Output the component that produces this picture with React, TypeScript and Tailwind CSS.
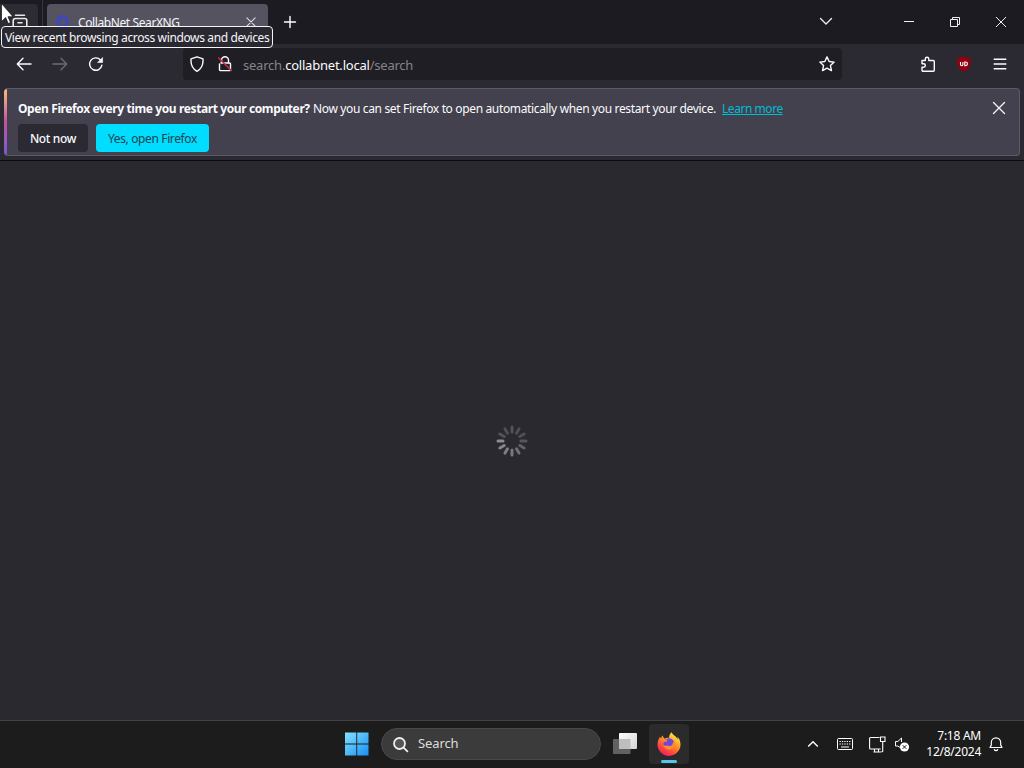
import React from 'react';

type IconProps = { className?: string; children: React.ReactNode; size?: number };

function Icon({ className = '', children, size = 16 }: IconProps) {
  return (
    <svg
      width={size}
      height={size}
      viewBox="0 0 16 16"
      fill="none"
      stroke="currentColor"
      strokeWidth="1.4"
      strokeLinecap="round"
      strokeLinejoin="round"
      className={`shrink-0 ${className}`}
    >
      {children}
    </svg>
  );
}

function TabStrip() {
  return (
    <div className="flex h-[44px] shrink-0 bg-[#1c1b22]">
      <div className="mt-1 flex h-9 w-[38px] justify-center rounded-r bg-[#2d2c34] pl-[2px] pt-[10px] text-[#e8e8ec]">
        <Icon>
          <path d="M3.5 1.2h9M1.2 15V6.500a2 2 0 0 1 2-2h9.600a2 2 0 0 1 2 2V15M6 8.700h4" strokeWidth="1.600" />
        </Icon>
      </div>
      <div className="ml-[4px] h-full w-px bg-[#36353e]" />
      <div className="ml-[4px] mt-1 flex h-9 w-[221px] items-center rounded bg-[#55535f] pl-2 pr-[11px]">
        <svg width="16" height="16" viewBox="0 0 16 16" className="shrink-0" fill="none" stroke="#3c46c8">
          <circle cx="7.500" cy="7" r="5" strokeWidth="2.400" />
          <path d="M5.300 6.800a2.200 2.200 0 0 1 2.200-2.200M11.500 11l4 4" strokeWidth="2" />
        </svg>
        <span className="ml-[7px] flex-1 whitespace-nowrap pt-[2px] text-[12px] tracking-[-0.400px] text-[#f4f4f7]">CollabNet SearXNG</span>
        <Icon size={12} className="text-[#e4e4e8]">
          <path d="M2.500 2.500l11 11M13.500 2.500l-11 11" />
        </Icon>
      </div>
      <Icon className="ml-[14px] mt-[14px] text-white">
        <path d="M8 2.500v11M2.500 8h11" />
      </Icon>
      <div className="flex-1" />
      <Icon className="mr-[69px] mt-[13px] text-[#ececf0]">
        <path d="M2.500 5.500L8 11l5.500-5.500" />
      </Icon>
      <svg width="12" height="12" viewBox="0 0 12 12" className="mr-[34px] mt-4" stroke="#f0f0f3">
        <path d="M1 5.500h10" />
      </svg>
      <svg width="12" height="12" viewBox="0 0 12 12" className="mr-[34px] mt-4" stroke="#f0f0f3" fill="none">
        <path d="M1.500 3.500h7v7h-7zM3.500 3.500v-2h7v7h-2" />
      </svg>
      <svg width="12" height="12" viewBox="0 0 12 12" className="mr-[17px] mt-4" stroke="#f0f0f3" fill="none">
        <path d="M1 1l10 10M11 1L1 11" />
      </svg>
    </div>
  );
}

function NavBar() {
  return (
    <div className="flex h-[43px] shrink-0 items-center bg-[#2b2a33] pb-[3px] pl-4 pr-4 text-[#fbfbfe]">
      <Icon>
        <path d="M15 8H1.500M7 2.200L1.300 8 7 13.800" />
      </Icon>
      <Icon className="ml-5 text-[#6d6c74]">
        <path d="M1 8h13.500M9 2.200L14.700 8 9 13.800" />
      </Icon>
      <Icon className="ml-5">
        <path d="M13.900 9.200A6.200 6.200 0 1 1 12.500 4" />
        <path d="M14.600 1.800v4.700H9.900z" fill="currentColor" strokeWidth="0.600" />
      </Icon>
      <div className="ml-[79px] flex h-8 w-[659px] items-center rounded bg-[#1f1e25] pl-[6px] pr-[7px]">
        <Icon>
          <path d="M8 .8l6 2.100c.4 6-1.400 10-6 12.400C3.400 12.900 1.600 8.900 2 2.900z" />
        </Icon>
        <Icon className="ml-3">
          <path d="M4.500 6.500V4.200a3.500 3.500 0 0 1 7 0v2.300M4 7h8.300a1.200 1.200 0 0 1 1.200 1.200v5.200a1.200 1.200 0 0 1-1.200 1.200H3.700a1.200 1.200 0 0 1-1.200-1.200V8" />
          <path d="M1.800 2l12.500 12.500" stroke="#c52c4c" strokeWidth="1.700" />
        </Icon>
        <span className="ml-[10px] flex-1 whitespace-nowrap pt-[3px] text-[13px] tracking-[-0.220px] text-[#85848c]">
          search.<span className="text-[#fbfbfe]">collabnet.local</span>/search
        </span>
        <Icon>
          <path d="M8 .9l2.150 4.600 5 .6-3.700 3.450 1 5L8 12.100l-4.450 2.450 1-5L.85 6.100l5-.6z" />
        </Icon>
      </div>
      <div className="flex-1" />
      <Icon>
        <path d="M2 4.500h3.300V3a1.700 1.700 0 0 1 3.500 0v1.500h4.500a1 1 0 0 1 1 1v8.700a1 1 0 0 1-1 1H3a1 1 0 0 1-1-1v-3h1.600a1.700 1.700 0 0 0 0-3.500H2z" />
      </Icon>
      <div className="ml-5 flex h-4 w-4 items-center justify-center">
        <svg width="16" height="16" viewBox="0 0 16 16">
          <path d="M8 0c2 1.500 4.500 2 7 2.200C15 9 13 13.500 8 16 3 13.500 1 9 1 2.200 3.500 2 6 1.500 8 0z" fill="#90000e" />
          <path d="M4.500 6v2.500a1.200 1.200 0 0 0 2.400 0V6M8.800 6v3.600h.8a1.800 1.800 0 0 0 0-3.600z" fill="none" stroke="#fff" strokeWidth="1.100" />
        </svg>
      </div>
      <Icon className="ml-5">
        <path d="M2.200 3.200h11.600M2.200 8h11.600M2.200 12.800h11.600" />
      </Icon>
    </div>
  );
}

function Notification() {
  return (
    <div className="h-[74px] shrink-0 border-b border-[#0c0c10] bg-[#2b2a33] pl-[4px] pr-[4px] pt-px">
      <div className="flex h-[68px] overflow-hidden rounded-[4px] border-y border-r border-[#5b5a66] bg-[#42414d]">
        <div className="-my-px w-[3px] shrink-0 bg-gradient-to-b from-[#ffbd70] via-[#c24f9f] to-[#7358d8]" />
        <div className="flex-1 pl-[11px] pt-3 text-[12px] text-[#fbfbfe]">
          <div className="flex h-4 items-center whitespace-nowrap">
            <b className="w-[295px] tracking-[-0.390px]">Open Firefox every time you restart your computer?</b>
            <span className="w-[409px] tracking-[-0.350px]">Now you can set Firefox to open automatically when you restart your device.</span>
            <a className="tracking-[-0.450px] text-[#00bcd4] underline">Learn more</a>
          </div>
          <div className="mt-[7px] flex gap-2 whitespace-nowrap">
            <button className="h-7 w-[70px] rounded bg-[#2b2a33] pt-[2px] font-medium tracking-[-0.350px]">Not now</button>
            <button className="h-7 w-[113px] rounded bg-[#00ddff] pt-[2px] tracking-[-0.370px] text-[#20414c]">Yes, open Firefox</button>
          </div>
        </div>
        <Icon className="mr-[12px] mt-[11px] text-[#f2f2f5]">
          <path d="M2.500 2.500l11 11M13.500 2.500l-11 11" />
        </Icon>
      </div>
    </div>
  );
}

const spokes = [0.27, 0.25, 0.25, 0.3, 0.38, 0.46, 0.52, 0.56, 0.62, 0.66, 0.27, 0.25];

function Spinner() {
  return (
    <svg width="32" height="32" viewBox="-16 -16 32 32">
      {spokes.map((opacity, i) => (
        <path key={i} d="M0 -9V-14" stroke="#c0c0c0" strokeWidth="3" strokeLinecap="round" opacity={opacity} transform={`rotate(${i * 30})`} />
      ))}
    </svg>
  );
}

function FirefoxLogo() {
  return (
    <svg width="24" height="24" viewBox="0 0 24 24">
      <defs>
        <linearGradient id="flame" x1="0.800" y1="0" x2="0.200" y2="1">
          <stop offset="0" stopColor="#fff44f" />
          <stop offset="0.400" stopColor="#ff9a24" />
          <stop offset="0.700" stopColor="#ff4a3d" />
          <stop offset="1" stopColor="#e81568" />
        </linearGradient>
      </defs>
      <path d="M14.700.3c-2 1.800-2.800 3.700-2.600 5.700-1.800-.4-3.300 0-4.600.8L5.300 3.500C4.600 4.300 4.300 5.300 4.300 6.300L2.800 4.900C1.500 6.900.5 9.700.5 12.300a11.500 11.500 0 0 0 23 .2c0-3.200-1.200-6-3.100-7.700l.5 2.700c-1.300-3-5.300-4.300-6.200-7.200z" fill="url(#flame)" />
      <circle cx="12" cy="11.800" r="5.500" fill="#7542d8" />
      <path d="M17 8.500c2.800 5.500-1.300 9.600-5.500 9.200-3-.3-5-2.500-5.300-5 2 2.100 4.200.8 5.300-.4-1.300 0-2-.8-1.800-2-1.500-1-2.500-.4-3.600.3C7.500 8.400 9.200 7 11 7.800c1.900.8 2.800 2.600 2.200 4.200 1.900-.1 3.400-1.600 3.800-3.500z" fill="#ff8a2b" />
      <circle cx="12.500" cy="10.800" r="3.200" fill="#6a48dc" />
    </svg>
  );
}

function Taskbar() {
  return (
    <div className="flex h-12 shrink-0 items-center border-t border-[#414145] bg-[#1c1c1c] pb-px">
      <svg width="24" height="24" viewBox="0 0 24 24" className="ml-[345px] shrink-0">
        <defs>
          <linearGradient id="win" gradientUnits="userSpaceOnUse" x1="0" y1="0" x2="24" y2="24">
            <stop offset="0" stopColor="#83e4ff" />
            <stop offset="1" stopColor="#168df2" />
          </linearGradient>
        </defs>
        <path d="M0 .5h11.300v11H0zM12.200.5h11.300v11H12.200zM0 12.500h11.300v11H0zM12.200 12.500h11.300v11H12.200z" fill="url(#win)" />
      </svg>
      <div className="ml-3 flex h-8 w-[220px] items-center rounded-full border border-[#484848] bg-[#3b3b3b] pl-[10px]">
        <svg width="17" height="17" viewBox="0 0 17 17" fill="#555" stroke="#efefef" strokeWidth="1.800" strokeLinecap="round">
          <circle cx="7.500" cy="7.500" r="5.500" />
          <path d="M11.600 11.600l3.800 3.800" />
        </svg>
        <span className="ml-[9px] text-[13px] tracking-[-0.100px] text-[#dedede]">Search</span>
      </div>
      <svg width="24" height="24" viewBox="0 0 24 24" className="ml-3 shrink-0">
        <defs>
          <linearGradient id="pane" x1="0" y1="0" x2="1" y2="1">
            <stop stopColor="#fff" />
            <stop offset="1" stopColor="#d4d4d4" />
          </linearGradient>
        </defs>
        <rect x="0" y="7" width="17.500" height="15" rx="1" fill="#616161" />
        <rect x="6" y="1" width="18" height="16" rx="1" fill="url(#pane)" />
        <path d="M6 7h11.500v10H6z" fill="#bebebe" />
      </svg>
      <div className="ml-3 flex h-10 w-10 flex-col items-center rounded bg-[#2b2b2b] pt-2">
        <FirefoxLogo />
        <div className="mt-[4px] h-[3px] w-4 rounded-full bg-[#55c4ee]" />
      </div>
      <div className="flex-1" />
      <svg width="12" height="12" viewBox="0 0 12 12" fill="none" stroke="#fff" strokeWidth="1.400" className="mr-[18px]">
        <path d="M1.200 8.500L6 3.700l4.800 4.800" />
      </svg>
      <svg width="16" height="12" viewBox="0 0 16 12" fill="none" stroke="#fff" className="mr-4 shrink-0">
        <rect x="0.500" y="0.500" width="15" height="11" rx="1" />
        <path d="M2.500 3.500h11M2.500 6h11" strokeDasharray="1.300 1.100" strokeWidth="1.200" />
        <path d="M4 9h8" />
      </svg>
      <svg width="17" height="17" viewBox="0 0 17 17" fill="none" stroke="#fff" strokeWidth="1.100" className="mr-[8px] shrink-0">
        <path d="M10.500 1.500h-9A1 1 0 0 0 .6 2.500v9.500a1 1 0 0 0 1 1h10M4.500 16h7.500M5.500 13v3M9.500 13v3M11.500 1h4.500v4.500h-4.500zM13.700 5.500v10.300M12.300 15.800h1.400" />
      </svg>
      <svg width="16" height="16" viewBox="0 0 16 16" fill="none" stroke="#fff" className="mr-[13px] shrink-0">
        <path d="M6 11.500L3.800 10H1.500V5.500h2.300L7.500 2v4" />
        <circle cx="10.500" cy="11" r="4.600" fill="#fff" stroke="none" />
        <path d="M8.700 9.200l3.600 3.600M12.300 9.200l-3.600 3.600" stroke="#1c1c1c" />
      </svg>
      <div className="w-[58px] whitespace-nowrap text-right text-[12px] leading-4 tracking-[-0.250px] text-white">
        <div>7:18 AM</div>
        <div>12/8/2024</div>
      </div>
      <Icon className="ml-[7px] mr-[20px] text-white">
        <path d="M2 11.500l1.300-2.400V6.500a4.700 4.700 0 0 1 9.400 0v2.600L14 11.500zM6.300 13.500a1.800 1.800 0 0 0 3.400 0" strokeWidth="1.200" />
      </Icon>
    </div>
  );
}

export default function App() {
  return (
    <div className="relative flex h-[768px] w-[1024px] flex-col overflow-hidden bg-[#2a292f] font-['Noto_Sans','Open_Sans',sans-serif]">
      <TabStrip />
      <NavBar />
      <Notification />
      <main className="flex flex-1 items-center justify-center">
        <Spinner />
      </main>
      <Taskbar />
      <div className="absolute left-px top-[26px] flex h-[22px] w-[272px] items-center whitespace-nowrap rounded-[4px] border border-[#f4f4f7] bg-[#2a2931] pl-[3px] pt-px text-[12px] tracking-[-0.360px] text-[#f6f6f9]">
        View recent browsing across windows and devices
      </div>
      <svg width="14" height="22" viewBox="0 0 14 22" className="absolute left-0 top-[3px]">
        <path d="M1.500.5v18l4.200-4 2.500 6 2.300-1-2.500-5.800h5z" fill="#fff" stroke="#111" strokeWidth="0.700" />
      </svg>
    </div>
  );
}
